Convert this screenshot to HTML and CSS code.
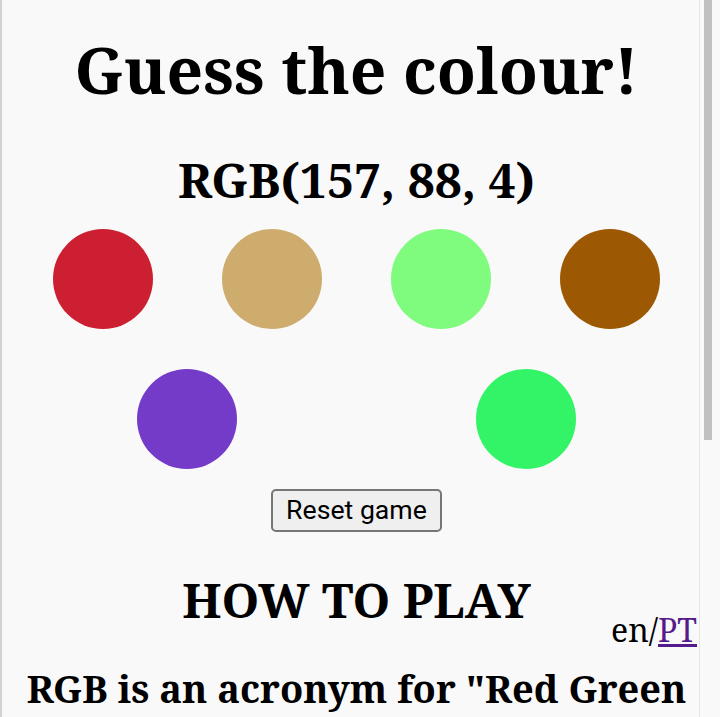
FILE: index.html
```html
<!DOCTYPE html>
<html lang="en">
<head>
<meta charset="utf-8">
<title>Guess the colour!</title>
<link rel="stylesheet" href="styles.css">
</head>
<body>
<div class="page">
  <main class="content">
    <h1 class="title">Guess the colour!</h1>
    <h2 class="target">RGB(157, 88, 4)</h2>
    <div class="swatches">
      <button class="swatch" style="background:#cd1f32" aria-label="colour 1"></button>
      <button class="swatch" style="background:#cdac6d" aria-label="colour 2"></button>
      <button class="swatch" style="background:#7ffb7e" aria-label="colour 3"></button>
      <button class="swatch" style="background:#9d5804" aria-label="colour 4"></button>
      <button class="swatch" style="background:#743bc9" aria-label="colour 5"></button>
      <button class="swatch" style="background:#33f466" aria-label="colour 6"></button>
    </div>
    <div class="actions">
      <button class="reset">Reset game</button>
    </div>
    <section class="help">
      <h2 class="help-title">HOW TO PLAY</h2>
      <div class="lang">en/<a href="#pt" class="lang-link">PT</a></div>
      <p class="help-text">RGB is an acronym for "Red Green Blue". Every colour on your screen is a mix of these three lights, each from 0 to 255.</p>
    </section>
  </main>
  <div class="scrollbar"></div>
</div>
</body>
</html>
```
FILE: styles.css
```css
html, body {
  margin: 0;
  padding: 0;
  background: #f9f9f9;
}
body {
  font-family: "Noto Serif", "DejaVu Serif Condensed", "DejaVu Serif", serif;
  color: #000;
  overflow: hidden;
  height: 717px;
}
.page {
  position: relative;
  width: 697px;
  min-height: 717px;
  border-left: 2px solid #d2d2d2;
  border-right: 1px solid #e6e6e6;
}
.content {
  padding: 32px 0 0 12px;
}
.title {
  margin: 0;
  font-size: 64px;
  line-height: 76px;
  font-weight: bold;
  text-align: center;
}
.target {
  margin: 44px 0 0;
  font-size: 48px;
  line-height: 56px;
  font-weight: bold;
  text-align: center;
}
.swatches {
  margin: 21px 4px 0;
  display: flex;
  flex-wrap: wrap;
  justify-content: space-around;
  row-gap: 40px;
}
.swatch {
  width: 100px;
  height: 100px;
  border: none;
  border-radius: 50%;
  padding: 0;
  margin: 0 34px;
}
.actions {
  margin-top: 20px;
  display: flex;
  justify-content: center;
}
.reset {
  font-family: Roboto, "Noto Sans", sans-serif;
  font-size: 26.67px;
  line-height: 35px;
  padding: 2px 13px;
  border: 2px solid #767676;
  border-radius: 5px;
  background: #efefef;
  color: #000;
}
.help {
  margin-top: 40px;
}
.help-title {
  margin: 0;
  font-size: 48px;
  line-height: 56px;
  font-weight: bold;
  text-align: center;
}
.lang {
  margin: -18px 2px 0 0;
  text-align: right;
  font-size: 32px;
  line-height: 40px;
}
.lang-link {
  color: #551a8b;
}
.help-text {
  margin: 14px 0 0;
  font-size: 38px;
  line-height: 48px;
  font-weight: bold;
  text-align: center;
}
.scrollbar {
  position: absolute;
  top: 0;
  left: 702px;
  width: 8px;
  height: 440px;
  background: #c1c1c1;
}
```
